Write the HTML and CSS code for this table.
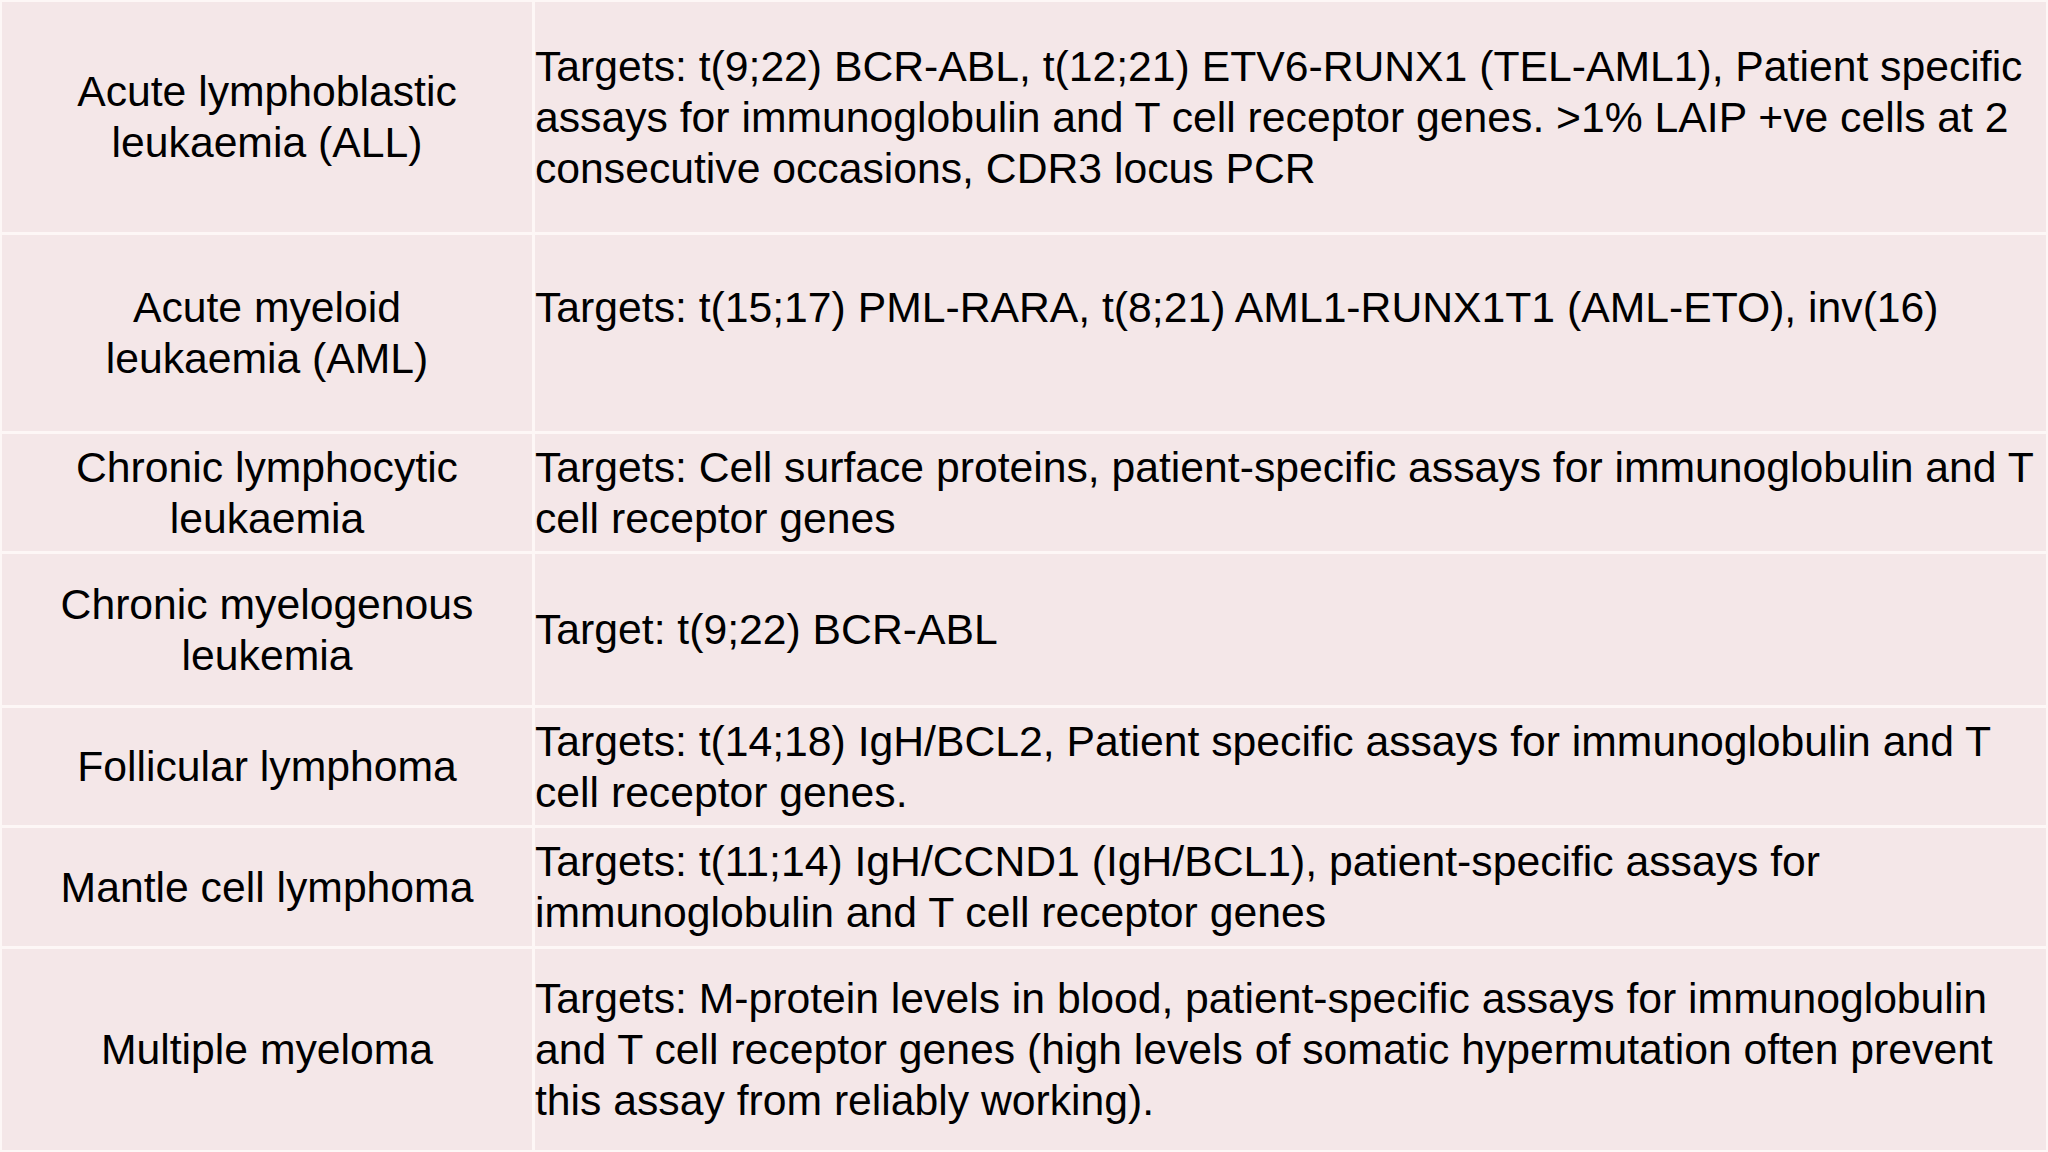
FILE: index.html
```html
<!DOCTYPE html>
<html>
<head>
<meta charset="utf-8">
<link rel="stylesheet" href="styles.css">
</head>
<body>
<div class="table">
  <div class="cell name">Acute lymphoblastic<br>leukaemia (ALL)</div>
  <div class="cell desc">Targets: t(9;22) BCR-ABL, t(12;21) ETV6-RUNX1 (TEL-AML1), Patient specific assays for immunoglobulin and T cell receptor genes. &gt;1% LAIP +ve cells at 2 consecutive occasions, CDR3 locus PCR</div>

  <div class="cell name">Acute myeloid<br>leukaemia (AML)</div>
  <div class="cell desc">Targets: t(15;17) PML-RARA, t(8;21) AML1-RUNX1T1 (AML-ETO), inv(16)<br>&nbsp;</div>

  <div class="cell name">Chronic lymphocytic<br>leukaemia</div>
  <div class="cell desc">Targets: Cell surface proteins, patient-specific assays for immunoglobulin and T cell receptor genes</div>

  <div class="cell name">Chronic myelogenous<br>leukemia</div>
  <div class="cell desc">Target: t(9;22) BCR-ABL</div>

  <div class="cell name">Follicular lymphoma</div>
  <div class="cell desc">Targets: t(14;18) IgH/BCL2, Patient specific assays for immunoglobulin and T cell receptor genes.</div>

  <div class="cell name">Mantle cell lymphoma</div>
  <div class="cell desc">Targets: t(11;14) IgH/CCND1 (IgH/BCL1), patient-specific assays for immunoglobulin and T cell receptor genes</div>

  <div class="cell name">Multiple myeloma</div>
  <div class="cell desc">Targets: M-protein levels in blood, patient-specific assays for immunoglobulin and T cell receptor genes (high levels of somatic hypermutation often prevent this assay from reliably working).</div>
</div>
</body>
</html>
```

FILE: styles.css
```css
html, body {
  margin: 0;
  padding: 0;
  background: #fdf7f6;
}
body {
  width: 2048px;
  height: 1152px;
  overflow: hidden;
}
.table {
  display: grid;
  grid-template-columns: 530px 1511px;
  grid-template-rows: 230px 196px 117px 151px 117px 118px 201px;
  column-gap: 3px;
  row-gap: 3px;
  padding: 2px 2px 2px 2px;
  background: #fdf7f6;
  font-family: "Liberation Sans", Arial, sans-serif;
  font-size: 42.7px;
  line-height: 51px;
  color: #000;
}
.cell {
  background: #f4e7e8;
  display: flex;
  flex-direction: column;
  justify-content: center;
}
.name {
  text-align: center;
  align-items: center;
}
.desc {
  padding: 0 2px 0 0;
}
```
